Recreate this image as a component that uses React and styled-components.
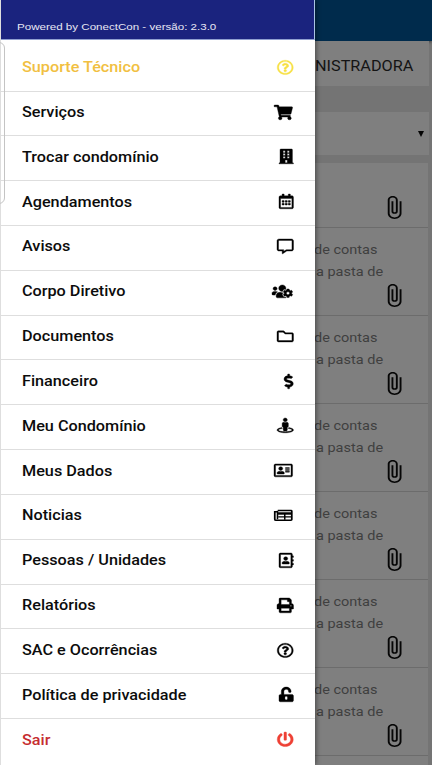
import React from 'react';
import styled, { createGlobalStyle } from 'styled-components';
import {
  FaRegQuestionCircle, FaShoppingCart, FaBuilding, FaRegCalendarAlt, FaRegCommentAlt,
  FaUsersCog, FaRegFolder, FaDollarSign, FaStreetView, FaRegAddressCard,
  FaRegAddressBook, FaPrint, FaUnlockAlt, FaPowerOff,
} from 'react-icons/fa';
import { MdAttachFile } from 'react-icons/md';

const GlobalStyle = createGlobalStyle`
  * { box-sizing: border-box; }
  body { margin: 0; overflow: hidden; font-family: Roboto, "Liberation Sans", sans-serif; }
`;

const Screen = styled.div`
  position: relative;
  width: 432px;
  height: 765px;
  overflow: hidden;
  background: #747474;
`;

const Page = styled.main`
  display: flex;
  flex-direction: column;
  height: 100%;
  padding-left: 315px;
`;

const TopBar = styled.header`
  flex: none;
  height: 41px;
  background: #002b4c;
  box-shadow: 0 1px 3px rgba(0, 0, 0, 0.45);
`;

const TabBar = styled.div`
  flex: none;
  display: flex;
  align-items: center;
  height: 45px;
  margin-right: 3px;
  padding-top: 4px;
  background: #7f7f7f;
`;

const TabLabel = styled.span`
  font-size: 14px;
  line-height: 20px;
  color: #141414;
  white-space: nowrap;
  transform: scaleX(1.16);
  transform-origin: left center;
`;

const SelectBox = styled.div`
  flex: none;
  display: flex;
  align-items: center;
  justify-content: flex-end;
  height: 43px;
  margin: 26px 3px 8px 0;
  padding-right: 5px;
  background: #7f7f7f;
`;

const Caret = styled.i`
  border: solid transparent;
  border-width: 6px 3.5px 0;
  border-top-color: #050505;
`;

const List = styled.div`
  flex: none;
  margin-right: 4px;
  background: #7f7f7f;
`;

const Entry = styled.article`
  display: flex;
  flex-direction: column;
  height: ${(p) => (p.$first ? 65 : 87.95)}px;
  padding-top: ${(p) => (p.$first ? 32 : 10.9)}px;
  border-bottom: 1px solid #6c6c6c;
`;

const EntryText = styled.span`
  height: 22.5px;
  margin-left: ${(p) => p.$shift || 0}px;
  font-size: 13.3px;
  line-height: 22.5px;
  color: #3f3f3f;
  white-space: nowrap;
  transform: scaleX(1.09);
  transform-origin: left center;
`;

const Clip = styled(MdAttachFile).attrs({ preserveAspectRatio: 'none' })`
  width: 30px;
  height: 25px;
  margin: -0.5px 19.5px 0 auto;
  color: #060606;
`;

const Drawer = styled.aside`
  position: absolute;
  inset: 0 auto 0 0;
  display: flex;
  flex-direction: column;
  width: 315px;
  background: #fff;
  border-left: 1px solid #dedede;
  box-shadow: 1px 0 5px rgba(0, 0, 0, 0.45);
`;

const DrawerHeader = styled.div`
  flex: none;
  display: flex;
  align-items: flex-end;
  height: 40px;
  padding: 0 0 5px 16px;
  border-right: 1px solid #a9c4e4;
  border-bottom: 1px solid #8f9fd0;
  background: #1a237e;
`;

const Version = styled.span`
  font: 9px/13px "Liberation Sans", Arial, sans-serif;
  color: #e8e8f4;
  white-space: nowrap;
  transform: scaleX(1.285);
  transform-origin: left center;
`;

const Menu = styled.nav`
  display: flex;
  flex-direction: column;
`;

const MenuItem = styled.a`
  flex: none;
  display: flex;
  align-items: center;
  justify-content: space-between;
  height: ${(p) => (p.$first ? 51.5 : 44.84)}px;
  padding: ${(p) => (p.$first ? 3.5 : 0)}px 22px ${(p) => (p.$first ? 0 : 2.9)}px 21px;
  border-bottom: 1px solid ${(p) => (p.$last ? 'transparent' : '#dedede')};
  color: ${(p) => p.$color || '#0c0c0c'};
`;

const MenuLabel = styled.span`
  font-size: 14px;
  font-weight: 500;
  line-height: 20px;
  white-space: nowrap;
  transform: scaleX(1.158);
  transform-origin: left center;
`;

const MenuIcon = styled.span`
  display: flex;
  color: ${(p) => p.$color || '#000'};

  svg {
    width: ${(p) => (p.$units / 512) * 16.5}px;
    height: 14.8px;
    overflow: visible;
    stroke-width: 12px;
  }
`;

const EdgeHandle = styled.div`
  position: absolute;
  top: 42px;
  left: -8px;
  width: 13px;
  height: 162px;
  border: 1px solid #c4c4c4;
  border-radius: 6px;
`;

function NewspaperIcon(props) {
  return (
    <svg viewBox="0 0 576 512" fill="none" stroke="currentColor" {...props}>
      <path d="M118 88H528a24 24 0 0 1 24 24V400a24 24 0 0 1-24 24H62a38 38 0 0 1-38-38V128h70" strokeWidth="54" />
      <path d="M108 96V390" strokeWidth="48" />
      <path d="M120 190H540" strokeWidth="84" />
      <path d="M130 306H540M334 210V410" strokeWidth="46" />
    </svg>
  );
}

const items = [
  { label: 'Suporte Técnico', icon: FaRegQuestionCircle, units: 512, color: '#f1bf42', iconColor: '#f7e043' },
  { label: 'Serviços', icon: FaShoppingCart, units: 576 },
  { label: 'Trocar condomínio', icon: FaBuilding, units: 448 },
  { label: 'Agendamentos', icon: FaRegCalendarAlt, units: 448 },
  { label: 'Avisos', icon: FaRegCommentAlt, units: 512 },
  { label: 'Corpo Diretivo', icon: FaUsersCog, units: 640 },
  { label: 'Documentos', icon: FaRegFolder, units: 512 },
  { label: 'Financeiro', icon: FaDollarSign, units: 288 },
  { label: 'Meu Condomínio', icon: FaStreetView, units: 512 },
  { label: 'Meus Dados', icon: FaRegAddressCard, units: 576 },
  { label: 'Noticias', icon: NewspaperIcon, units: 576 },
  { label: 'Pessoas / Unidades', icon: FaRegAddressBook, units: 448 },
  { label: 'Relatórios', icon: FaPrint, units: 512 },
  { label: 'SAC e Ocorrências', icon: FaRegQuestionCircle, units: 512 },
  { label: 'Política de privacidade', icon: FaUnlockAlt, units: 448 },
  { label: 'Sair', icon: FaPowerOff, units: 512, color: '#c62d30', iconColor: '#ee4034' },
];

const entries = [
  [],
  ...Array.from({ length: 6 }, () => ['de contas', 'a pasta de']),
  [],
];

export default function App() {
  return (
    <Screen>
      <GlobalStyle />
      <Page>
        <TopBar />
        <TabBar><TabLabel>NISTRADORA</TabLabel></TabBar>
        <SelectBox><Caret /></SelectBox>
        <List>
          {entries.map((lines, n) => (
            <Entry key={n} $first={n === 0}>
              {lines.map((line, i) => (
                <EntryText key={line} $shift={i === 0 ? -1 : 0.5}>{line}</EntryText>
              ))}
              <Clip />
            </Entry>
          ))}
        </List>
      </Page>
      <Drawer>
        <DrawerHeader><Version>Powered by ConectCon - versão: 2.3.0</Version></DrawerHeader>
        <Menu>
          {items.map(({ label, icon: Icon, units, color, iconColor }, i) => (
            <MenuItem key={label} $first={i === 0} $last={i === items.length - 1} $color={color}>
              <MenuLabel>{label}</MenuLabel>
              <MenuIcon $units={units} $color={iconColor}><Icon preserveAspectRatio="none" /></MenuIcon>
            </MenuItem>
          ))}
        </Menu>
      </Drawer>
      <EdgeHandle />
    </Screen>
  );
}
